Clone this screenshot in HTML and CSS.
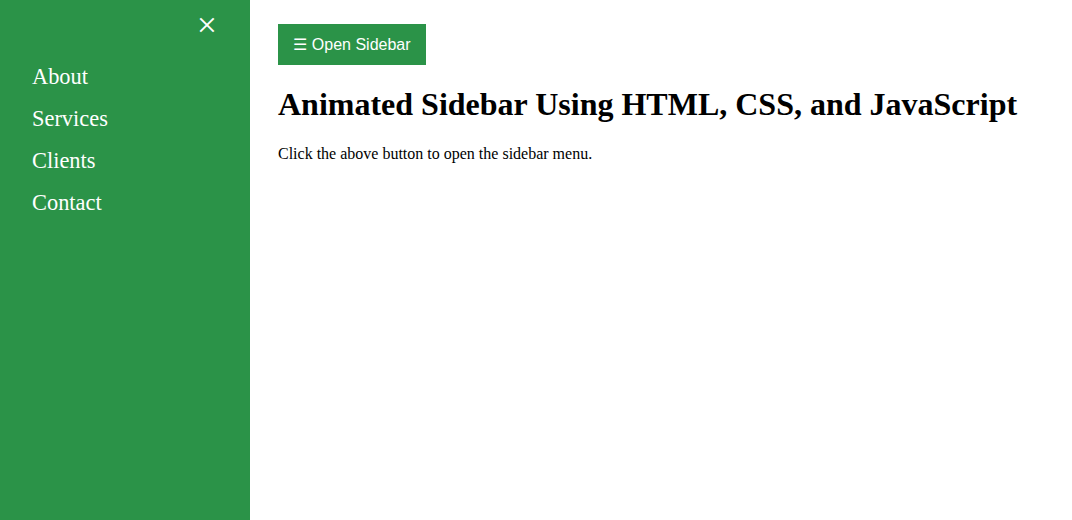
FILE: index.html
```html
<!DOCTYPE html>
<html>
<head>
<meta charset="utf-8">
<link rel="stylesheet" href="styles.css">
</head>
<body>
<div class="sidebar">
  <a href="#" class="closebtn">×</a>
  <a href="#" class="navlink">About</a>
  <a href="#" class="navlink">Services</a>
  <a href="#" class="navlink">Clients</a>
  <a href="#" class="navlink">Contact</a>
</div>
<div class="main">
  <button class="openbtn">☰ Open Sidebar</button>
  <h1 class="title">Animated Sidebar Using HTML, CSS, and JavaScript</h1>
  <p class="desc">Click the above button to open the sidebar menu.</p>
</div>
</body>
</html>
```
FILE: styles.css
```css
html, body {
  margin: 0;
  padding: 0;
}
body {
  font-family: "Liberation Serif", "Times New Roman", serif;
  display: flex;
  min-height: 520px;
}
.sidebar {
  position: relative;
  width: 250px;
  flex: 0 0 250px;
  min-height: 520px;
  background: #2b9348;
  padding-top: 56px;
  box-sizing: border-box;
  display: flex;
  flex-direction: column;
}
.navlink {
  display: block;
  padding: 8px 8px 8px 32px;
  font-size: 22.4px;
  color: #ffffff;
  text-decoration: none;
}
.closebtn {
  position: absolute;
  top: 4px;
  right: 33px;
  font-size: 36px;
  color: #ffffff;
  text-decoration: none;
}
.main {
  padding: 24px 28px;
}
.openbtn {
  font-family: "Liberation Sans", Arial, sans-serif;
  font-size: 16px;
  background: #2b9348;
  color: #ffffff;
  border: none;
  padding: 10px 15px;
  width: 148px;
  height: 41px;
  cursor: pointer;
}
.title {
  font-size: 32px;
  margin: 21px 0 22px;
}
.desc {
  font-size: 16px;
  margin: 16px 0;
}
```
